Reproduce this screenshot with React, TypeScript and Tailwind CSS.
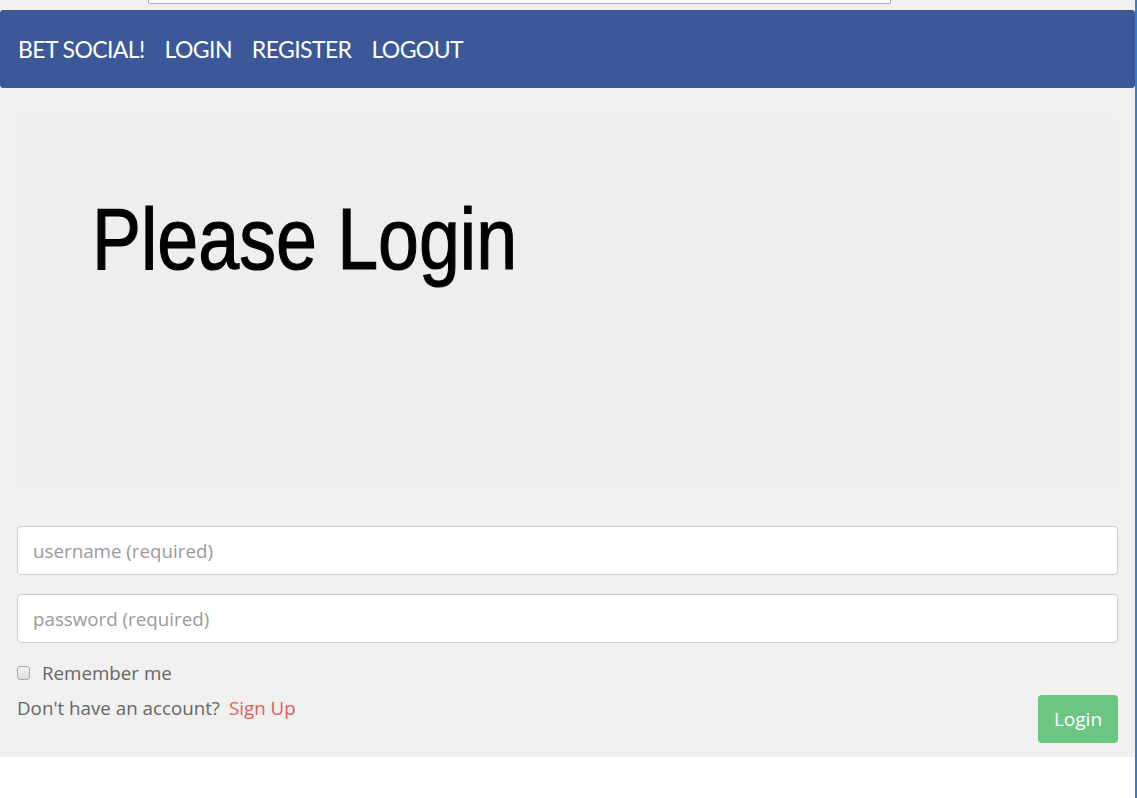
export default function App() {
  return (
    <div className="flex min-h-[798px] w-[1137px] bg-white" style={{ fontFamily: '"Open Sans", sans-serif' }}>
      <div className="flex w-[1135px] flex-col">
        {/* top strip with the cut-off search box */}
        <div className="h-[10px] bg-[#f0f0f0] pl-[148px]">
          <div className="h-[4px] w-[743px] rounded-b-[2px] border-x border-b border-[#a9a9a9] bg-white" />
        </div>

        <nav className="flex h-[78px] items-center gap-[20px] rounded-[3px] bg-[#3b5998] pl-[18px] text-[23px] tracking-[-0.6px] text-white" style={{ fontFamily: 'Lato, sans-serif' }}>
          <span>BET SOCIAL!</span>
          <span>LOGIN</span>
          <span>REGISTER</span>
          <span>LOGOUT</span>
        </nav>

        <main className="flex flex-col bg-[#f0f0f0] px-[17px] pb-[14px] pt-[27px]">
          <div className="flex h-[374px] items-start rounded-[6px] bg-[#eeeeee] pl-[75px] pt-[72px]">
            <h1
              className="origin-left scale-x-[0.845] whitespace-nowrap text-[87px] leading-[1.2] text-black [-webkit-text-stroke:1.2px_black]"
              style={{ fontFamily: '"Liberation Sans", Arial, sans-serif' }}
            >
              Please Login
            </h1>
          </div>

          <input
            className="mt-[37px] h-[49px] rounded-[4px] border border-[#cccccc] bg-white px-[15px] text-[18.75px] text-[#555] outline-none placeholder:text-[#999]"
            placeholder="username (required)"
          />
          <input
            className="mt-[19px] h-[49px] rounded-[4px] border border-[#cccccc] bg-white px-[15px] text-[18.75px] text-[#555] outline-none placeholder:text-[#999]"
            placeholder="password (required)"
            type="password"
          />

          <label className="mt-[17px] flex items-center gap-[12px] text-[18.75px] leading-[26px] text-[#666]">
            <span className="h-[14px] w-[13px] rounded-[3px] border border-[#aaa] bg-gradient-to-b from-[#f4f4f4] to-[#dcdcdc]" />
            Remember me
          </label>

          <div className="flex items-start justify-between">
            <p className="mt-[9px] text-[18.75px] leading-[26px] text-[#666]">
              Don't have an account?<span className="ml-[9px] text-[#e05c5c]">Sign Up</span>
            </p>
            <button className="mt-[9px] h-[48px] w-[80px] rounded-[4px] bg-[#6bc683] text-[19px] text-white">Login</button>
          </div>
        </main>
      </div>
      <div className="w-[2px] bg-[#2b7fd0]" />
    </div>
  );
}
